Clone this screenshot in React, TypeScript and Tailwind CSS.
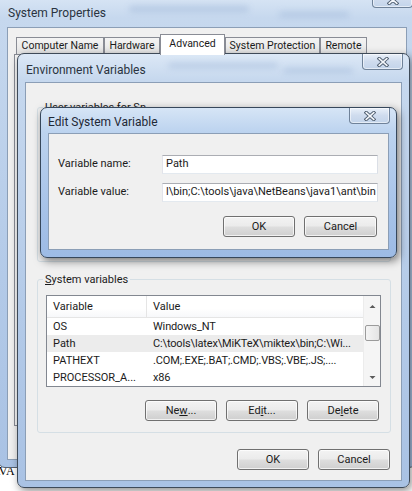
import type { ReactNode } from 'react';

const frame =
  'bg-[linear-gradient(180deg,#dce8f6_0px,#c6d8ee_26px,#b3cae8_60%,#a9c2e4_100%)]';

function CloseButton({ className }: { className: string }) {
  return (
    <div
      className={`absolute top-0 flex h-[16px] w-[41px] items-center justify-center rounded-b-[4px] border border-t-0 border-[#6f8299] bg-[linear-gradient(180deg,#e9f0f9,#cfdcee_50%,#c3d4ea)] shadow-[inset_0_0_0_1px_rgba(255,255,255,0.55)] ${className}`}>
      <svg width="12" height="10" viewBox="0 0 12 10">
        <path
          d="M2.2 1.6 L9.8 8.4 M9.8 1.6 L2.2 8.4"
          stroke="#4b5a6c"
          strokeWidth="3.4"
          strokeLinecap="square"
        />
        <path
          d="M2.2 1.6 L9.8 8.4 M9.8 1.6 L2.2 8.4"
          stroke="#f4f7fb"
          strokeWidth="1.6"
          strokeLinecap="square"
        />
      </svg>
    </div>
  );
}

// soft streaks of whatever sits behind the glass title bars
function Haze({ className }: { className: string }) {
  return <div className={`absolute rounded-full bg-[#8fa9cf] opacity-40 blur-[3px] ${className}`} />;
}

function Btn({ children, w = 'w-[72px]' }: { children: ReactNode; w?: string }) {
  return (
    <div
      className={`flex h-[21px] ${w} items-center justify-center rounded-[3px] border border-[#707070] bg-[linear-gradient(180deg,#f3f3f3,#ebebeb_48%,#dedede_52%,#cfcfcf)] text-[11px] leading-none text-[#1b1b1b] shadow-[inset_0_0_0_1px_rgba(255,255,255,0.7)]`}>
      {children}
    </div>
  );
}

function Tab({ label, width, active }: { label: string; width: string; active?: boolean }) {
  return (
    <div
      className={`${width} flex items-center justify-center border border-b-0 border-[#898c95] text-[10.5px] text-[#1b1b1b] ${
        active
          ? 'relative z-10 -mb-px h-[21px] bg-white pb-[2px]'
          : 'h-[17px] bg-[linear-gradient(180deg,#f4f4f4,#e4e4e4)]'
      }`}>
      {label}
    </div>
  );
}

const rows = [
  { name: 'OS', value: 'Windows_NT' },
  { name: 'Path', value: 'C:\\tools\\latex\\MiKTeX\\miktex\\bin;C:\\Wi...', selected: true },
  { name: 'PATHEXT', value: '.COM;.EXE;.BAT;.CMD;.VBS;.VBE;.JS;....' },
  { name: 'PROCESSOR_A...', value: 'x86' },
];

export default function App() {
  return (
    <div className="relative h-[491px] w-[412px] overflow-hidden bg-white font-[Roboto,'Liberation_Sans',sans-serif] text-[#1b1b1b]">
      {/* page text under the dialogs */}
      <div className="absolute left-[-13px] top-[464px] font-['Liberation_Serif',serif] text-[12px] leading-[14px] text-black">
        JAVA
      </div>

      {/* System Properties */}
      <div
        className={`absolute left-[-2px] top-[-9px] flex h-[477px] w-[418px] flex-col overflow-hidden rounded-[7px] border border-[#55616f] ${frame}`}>
        <Haze className="left-[130px] top-[14px] h-[6px] w-[120px]" />
        <Haze className="left-[280px] top-[20px] h-[5px] w-[70px]" />
        <div className="relative h-[35px] pl-[9px] pt-[13px] text-[12px] leading-[16px] text-[#2a3340]">
          System Properties
        </div>
        <CloseButton className="left-[373px]" />
        <div className="relative mx-[8px] mb-[7px] flex flex-1 flex-col border border-[#8b9eb6] bg-[#f0f0f0] pl-[6px] pt-[6px]">
          <div className="flex items-end pl-[2px]">
            <Tab label="Computer Name" width="w-[88px]" />
            <Tab label="Hardware" width="w-[56px]" />
            <Tab label="Advanced" width="w-[65px]" active />
            <Tab label="System Protection" width="w-[95px]" />
            <Tab label="Remote" width="w-[47px]" />
          </div>
          <div className="h-[372px] border border-[#898c95] bg-[#f7f7f7]" />
        </div>
      </div>

      {/* Environment Variables */}
      <div
        className={`absolute left-[17px] top-[53px] flex h-[435px] w-[393px] flex-col rounded-[7px] border border-[#3e4a58] shadow-[2px_3px_9px_rgba(0,0,0,0.45)] ${frame}`}>
        <Haze className="left-[150px] top-[9px] h-[5px] w-[110px]" />
        <Haze className="left-[265px] top-[14px] h-[5px] w-[70px]" />
        <div className="relative h-[28px] pl-[8px] pt-[8px] text-[12px] leading-[16px] text-[#2a3340]">
          Environment Variables
        </div>
        <CloseButton className="left-[344px]" />
        <div className="mx-[7px] mb-[6px] flex flex-1 flex-col border border-[#8b9eb6] bg-[#f0f0f0]">
          <fieldset className="ml-[11px] mr-[10px] mt-[17px] h-[162px] rounded-[3px] border border-[#d5dfe5]">
            <legend className="ml-[5px] px-[2px] text-[11px] leading-[15px]">
              User variables for Sn...
            </legend>
          </fieldset>

          <fieldset className="ml-[11px] mr-[10px] mt-[10px] rounded-[3px] border border-[#d5dfe5]">
            <legend className="ml-[5px] px-[2px] text-[11px] leading-[15px]">
              <span className="underline">S</span>ystem variables
            </legend>
            <div className="flex flex-col pb-[11px] pl-[8px] pr-[9px] pt-[8px]">
              <div className="flex h-[92px] border border-[#828790] bg-white">
                <div className="flex flex-1 flex-col text-[11px] leading-none">
                  <div className="flex h-[22px] items-center border-b border-[#e5e5e5] bg-[linear-gradient(180deg,#ffffff,#ffffff_60%,#f7f8fa)]">
                    <div className="flex h-full w-[100px] items-center border-r border-[#e5e5e5] pl-[6px]">
                      Variable
                    </div>
                    <div className="pl-[6px]">Value</div>
                  </div>
                  {rows.map((r) => (
                    <div
                      key={r.name}
                      className={`flex h-[17px] shrink-0 items-center whitespace-nowrap ${
                        r.selected ? 'bg-[#ececec]' : ''
                      }`}>
                      <div className="w-[100px] pl-[6px]">{r.name}</div>
                      <div className="pl-[6px] tracking-[-0.15px]">{r.value}</div>
                    </div>
                  ))}
                </div>
                {/* vertical scroll bar */}
                <div className="flex w-[17px] flex-col items-center border-l border-[#ececec] bg-[#f5f5f5]">
                  <svg width="9" height="17" viewBox="0 0 9 17" className="mt-[2px]">
                    <path d="M1.5 10 L4.5 7 L7.5 10 Z" fill="#5a5a5a" />
                  </svg>
                  <div className="mt-[10px] h-[16px] w-[15px] rounded-[2px] border border-[#9b9b9b] bg-[linear-gradient(90deg,#f4f4f4,#e4e4e4)]" />
                  <div className="flex-1" />
                  <svg width="9" height="17" viewBox="0 0 9 17">
                    <path d="M1.5 7 L4.5 10 L7.5 7 Z" fill="#5a5a5a" />
                  </svg>
                </div>
              </div>
              <div className="mt-[13px] flex justify-end gap-[9px] pr-[2px]">
                <Btn>
                  Ne<span className="underline">w</span>...
                </Btn>
                <Btn>
                  Ed<span className="underline">i</span>t...
                </Btn>
                <Btn>
                  De<span className="underline">l</span>ete
                </Btn>
              </div>
            </div>
          </fieldset>

          <div className="mt-[16px] flex justify-end gap-[9px] pr-[11px]">
            <Btn>OK</Btn>
            <Btn>Cancel</Btn>
          </div>
        </div>
      </div>

      {/* Edit System Variable */}
      <div
        className={`absolute left-[40px] top-[107px] flex h-[151px] w-[357px] flex-col rounded-[7px] border border-[#36475b] shadow-[2px_3px_9px_rgba(0,0,0,0.5)] bg-[linear-gradient(180deg,#d6e5f6_0px,#bcd3ef_24px,#a6c2e8_70%,#9dbbe5_100%)]`}>
        <div className="h-[25px] pl-[7px] pt-[6px] text-[12px] leading-[16px] text-[#1f2835]">
          Edit System Variable
        </div>
        <CloseButton className="left-[308px]" />
        <div className="mx-[7px] mb-[7px] flex flex-1 flex-col border border-[#8b9eb6] bg-[#f0f0f0] pl-[9px] pr-[10px] pt-[21px]">
          <div className="grid grid-cols-[104px_1fr] items-center gap-y-[9px] text-[11px]">
            <div>Variable name:</div>
            <div className="flex h-[19px] items-center border border-[#abadb3] border-b-[#e3e9ef] border-l-[#e2e3ea] border-r-[#dbdfe6] bg-white pl-[3px]">
              Path
            </div>
            <div>Variable value:</div>
            <div className="flex h-[19px] items-center overflow-hidden whitespace-nowrap border border-[#abadb3] border-b-[#e3e9ef] border-l-[#e2e3ea] border-r-[#dbdfe6] bg-white pl-[3px]">
              l\bin;C:\tools\java\NetBeans\java1\ant\bin
            </div>
          </div>
          <div className="mt-[14px] flex justify-end gap-[9px] pr-[1px]">
            <Btn>OK</Btn>
            <Btn w="w-[73px]">Cancel</Btn>
          </div>
        </div>
      </div>
    </div>
  );
}
